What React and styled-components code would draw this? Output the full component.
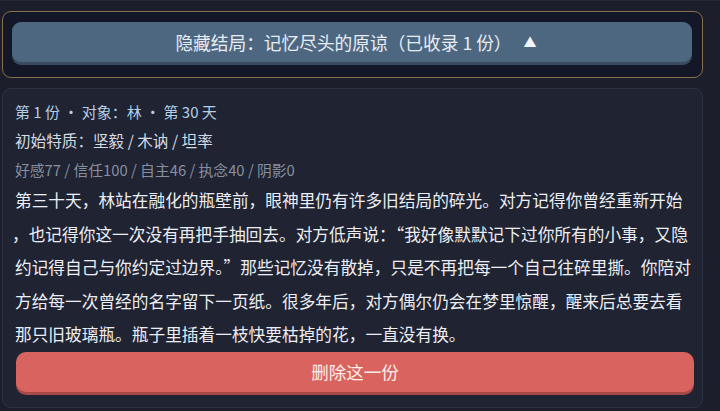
import React from "react";
import styled, { createGlobalStyle } from "styled-components";

const Global = createGlobalStyle`
  html, body {
    margin: 0;
    padding: 0;
    background: #1c1f2b;
  }
  body {
    font-family: "Noto Sans CJK SC", "Noto Sans", sans-serif;
    -webkit-font-smoothing: antialiased;
  }
`;

const Page = styled.div`
  width: 720px;
  height: 411px;
  box-sizing: border-box;
  padding: 10px 17px 0 2px;
  display: flex;
  flex-direction: column;
  gap: 10px;
  overflow: hidden;
  border-top: 1px solid #232733;
`;

const Banner = styled.div`
  box-sizing: border-box;
  border: 1px solid #86724a;
  border-radius: 9px;
  background: #131727;
  padding: 10px 10px 12px 9px;
`;

const BannerButton = styled.button`
  width: 100%;
  height: 40px;
  margin: 0 0 3px;
  border: none;
  border-radius: 9px;
  background: #4e6781;
  box-shadow: 0 3px 0 #394b60;
  color: #e7edf4;
  font-family: inherit;
  font-size: 17.7px;
  display: flex;
  align-items: center;
  justify-content: center;
  gap: 12px;
  padding: 0 0 0 8px;
  cursor: pointer;
`;

const Caret = styled.span`
  font-size: 13px;
  color: #f2f5f8;
  line-height: 1;
  transform: translateY(-1px);
`;

const Card = styled.div`
  box-sizing: border-box;
  height: 320px;
  border: 1px solid #2c3243;
  border-radius: 9px;
  background: #1f2332;
  padding: 8px 11px 0 12px;
  display: flex;
  flex-direction: column;
`;

const Meta = styled.div`
  font-size: ${(p) => p.$size}px;
  line-height: 29px;
  color: ${(p) => p.$color};
  white-space: nowrap;
`;

const Story = styled.p`
  margin: 0;
  font-size: 16.7px;
  line-height: 33.5px;
  color: #eceef3;
`;

const StoryLine = styled.span`
  display: block;
  white-space: nowrap;
  margin-left: ${(p) => (p.$lead ? "-3px" : "0")};
`;

const DeleteButton = styled.button`
  margin: 0 0 0 1px;
  width: 678px;
  height: 40px;
  border: none;
  border-radius: 10px;
  background: #d9645f;
  box-shadow: 0 3px 0 #a64947;
  color: #fdeeea;
  font-family: inherit;
  font-size: 17.5px;
  cursor: pointer;
`;

const lines = [
  "第三十天，林站在融化的瓶壁前，眼神里仍有许多旧结局的碎光。对方记得你曾经重新开始",
  "，也记得你这一次没有再把手抽回去。对方低声说：“我好像默默记下过你所有的小事，又隐",
  "约记得自己与你约定过边界。”那些记忆没有散掉，只是不再把每一个自己往碎里撕。你陪对",
  "方给每一次曾经的名字留下一页纸。很多年后，对方偶尔仍会在梦里惊醒，醒来后总要去看",
  "那只旧玻璃瓶。瓶子里插着一枝快要枯掉的花，一直没有换。",
];

export default function App() {
  return (
    <>
      <Global />
      <Page>
        <Banner>
          <BannerButton>
            <span>隐藏结局：记忆尽头的原谅（已收录 1 份）</span>
            <Caret>▲</Caret>
          </BannerButton>
        </Banner>
        <Card>
          <Meta $size={15} $color="#b4cfe9">第 1 份 · 对象：林 · 第 30 天</Meta>
          <Meta $size={15.6} $color="#d6dbe3">初始特质：坚毅 / 木讷 / 坦率</Meta>
          <Meta $size={14.8} $color="#878fa0">好感77 / 信任100 / 自主46 / 执念40 / 阴影0</Meta>
          <Story>
            {lines.map((l, i) => (
              <StoryLine key={i} $lead={l.startsWith("，")}>{l}</StoryLine>
            ))}
          </Story>
          <DeleteButton>删除这一份</DeleteButton>
        </Card>
      </Page>
    </>
  );
}
